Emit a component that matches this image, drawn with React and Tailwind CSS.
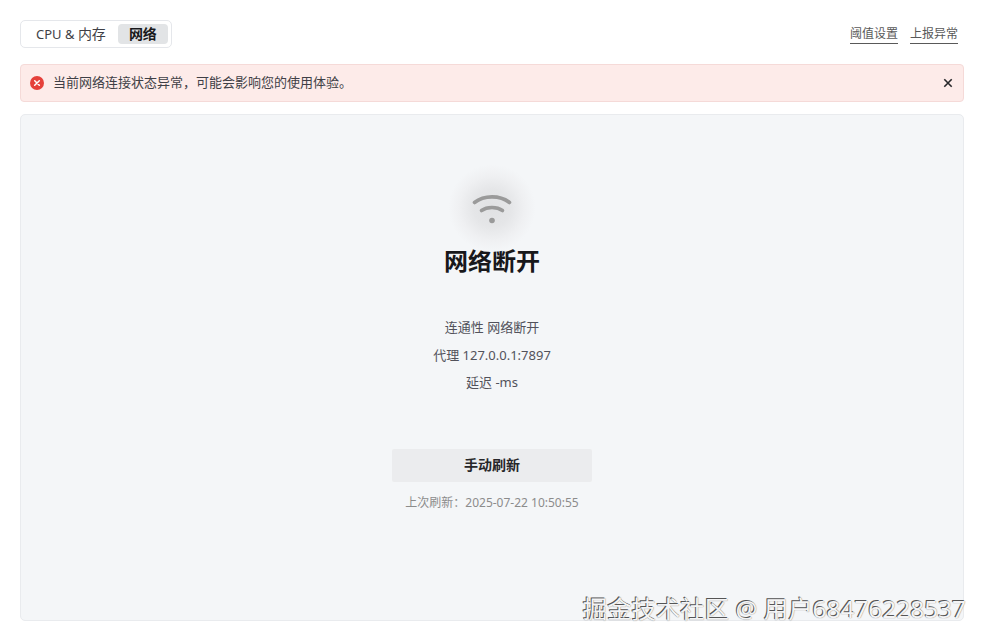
import React from "react";

const font = { fontFamily: '"Noto Sans", "Noto Sans CJK SC", sans-serif' };

function Wifi() {
  return (
    <div className="relative flex h-[88px] w-[88px] items-center justify-center rounded-full bg-[radial-gradient(circle,#e0e1e3_0%,#e5e6e8_30%,#eff0f2_52%,#f4f6f8_70%)]">
      <svg width="40" height="36" viewBox="0 0 40 36" fill="none" className="translate-y-[2px]">
        <path d="M2.5 10.5 C12 3 28 3 37.5 10.5" stroke="#9a9a9a" strokeWidth="3.6" strokeLinecap="round" />
        <path d="M9.5 18.5 C15 14.5 25 14.5 30.5 18.5" stroke="#9a9a9a" strokeWidth="3.6" strokeLinecap="round" />
        <circle cx="20" cy="28.5" r="2.8" fill="#9a9a9a" />
      </svg>
    </div>
  );
}

export default function App() {
  return (
    <div style={font} className="relative flex h-[641px] w-[984px] flex-col overflow-hidden bg-white px-5 pb-5 pt-5 text-[13px] text-[#3f3f46]">
      <header className="flex h-[28px] items-center justify-between">
        <div className="flex h-[28px] items-center rounded-[5px] border border-[#e5e7eb] px-[3px]">
          <span className="pl-[12px] pr-[12px] text-[13px] leading-[20px] text-[#3f3f46]">CPU &amp; <span className="text-[14px]">内存</span></span>
          <span className="rounded-[4px] bg-[#e2e4e6] px-[11px] text-[14px] font-bold leading-[20px] text-[#18181b]">网络</span>
        </div>
        <div className="flex items-center gap-[12px] pr-[6px] text-[12px] text-[#595959]">
          <span className="border-b border-[#595959] leading-[18px]">阈值设置</span>
          <span className="border-b border-[#595959] leading-[18px]">上报异常</span>
        </div>
      </header>

      <div className="mt-4 flex h-[38px] items-center rounded-[4px] border border-[#f5dad8] bg-[#fdebe9] pl-[9px] pr-[8px]">
        <svg width="14" height="14" viewBox="0 0 14 14">
          <circle cx="7" cy="7" r="7" fill="#e5403a" />
          <path d="M4.7 4.7 L9.3 9.3 M9.3 4.7 L4.7 9.3" stroke="#fff" strokeWidth="1.5" strokeLinecap="round" />
        </svg>
        <span className="ml-[9px] flex-1 -translate-y-px text-[13px] leading-[20px] text-[#3f3f46]">当前网络连接状态异常，可能会影响您的使用体验。</span>
        <svg width="14" height="14" viewBox="0 0 14 14">
          <path d="M3.3 3.3 L10.7 10.7 M10.7 3.3 L3.3 10.7" stroke="#27272a" strokeWidth="1.6" />
        </svg>
      </div>

      <main className="mt-3 flex min-h-0 flex-1 flex-col items-center rounded-[5px] border border-[#e9ebee] bg-[#f4f6f8] pt-[49px]">
        <Wifi />
        <h1 className="mt-[-9px] text-[24px] font-bold leading-[36px] text-[#18181b]">网络断开</h1>
        <div className="mt-[38px] flex flex-col items-center gap-[7.5px] text-[13px] leading-[20px] text-[#52525b]">
          <p>连通性 网络断开</p>
          <p>代理 127.0.0.1:7897</p>
          <p>延迟 -ms</p>
        </div>
        <button className="mt-[57px] h-[33px] w-[200px] rounded-[2px] bg-[#ebecee] pb-[2px] text-[14px] font-bold text-[#27272a]">手动刷新</button>
        <p className="mt-[11px] text-[12px] leading-[20px] text-[#8c8c8c]">上次刷新：2025-07-22 10:50:55</p>
      </main>

      <div className="absolute right-[18px] top-[593px] whitespace-nowrap text-[24.4px] leading-[32px] text-[#f4f4f5] [text-shadow:-1px_-1px_0_#555,0_0_1px_#666]">掘金技术社区 @ 用户68476228537</div>
    </div>
  );
}
